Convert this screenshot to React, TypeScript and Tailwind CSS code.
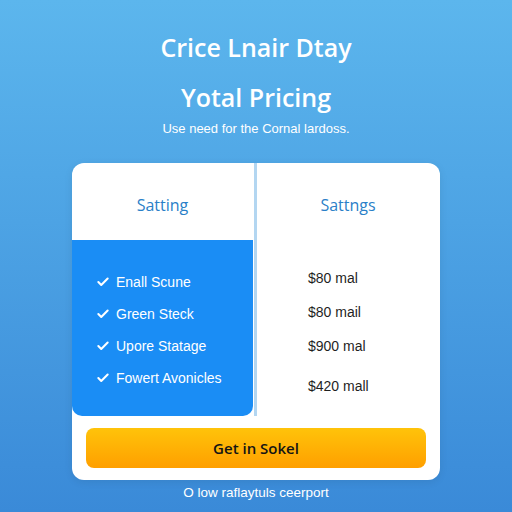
import { Check } from 'lucide-react'

const features = ['Enall Scune', 'Green Steck', 'Upore Statage', 'Fowert Avonicles']

const prices = [
  { label: '$80 mal', mt: 'mt-[0px]' },
  { label: '$80 mail', mt: 'mt-[2px]' },
  { label: '$900 mal', mt: 'mt-[2px]' },
  { label: '$420 mall', mt: 'mt-[8px]' },
]

export default function App() {
  return (
    <div
      className="h-[512px] w-[512px] overflow-hidden bg-gradient-to-b from-[#5cb6ed] to-[#3a8ad8] flex flex-col items-center text-white"
      style={{ fontFamily: '"Open Sans", "Liberation Sans", sans-serif' }}
    >
      {/* Header */}
      <h1 className="pt-[30px] text-[25px] font-semibold leading-[34px]">Crice Lnair Dtay</h1>
      <h2 className="mt-[16px] text-[25px] font-semibold leading-[34px]">Yotal Pricing</h2>
      <p className="mt-[6px] text-[13px] leading-[18px]" style={{ fontFamily: '"Liberation Sans", sans-serif' }}>
        Use need for the Cornal lardoss.
      </p>

      {/* Pricing card */}
      <div className="mt-[25px] w-[368px] rounded-[12px] bg-white shadow-[0_2px_8px_rgba(0,0,0,0.08)] flex flex-col">
        <div className="flex h-[253px]">
          {/* Left column */}
          <div className="w-[181px] flex flex-col">
            <div className="h-[77px] pt-[30px] text-center text-[16px] leading-[24px] text-[#2a80c8]">Satting</div>
            <div
              className="flex-1 rounded-b-[10px] bg-[#1a8df5] pl-[24px] pt-[26px]"
              style={{ fontFamily: '"Liberation Sans", sans-serif' }}
            >
              {features.map((f) => (
                <div key={f} className="flex h-[32px] items-center gap-[6px] text-[14px] text-white">
                  <Check className="h-[14px] w-[14px]" strokeWidth={3.5} />
                  <span>{f}</span>
                </div>
              ))}
            </div>
          </div>

          {/* Divider */}
          <div className="w-[5px] bg-[#b3d6f1] border-x border-white" />

          {/* Right column */}
          <div className="flex-1 flex flex-col">
            <div className="h-[77px] pt-[30px] pr-[2px] text-center text-[16px] leading-[24px] text-[#2a80c8]">Sattngs</div>
            <div
              className="flex flex-col pl-[50px] pt-[22px] text-[14px] text-[#1f1f1f]"
              style={{ fontFamily: '"Liberation Sans", sans-serif' }}
            >
              {prices.map((p) => (
                <div key={p.label} className={`h-[32px] leading-[32px] ${p.mt}`}>
                  {p.label}
                </div>
              ))}
            </div>
          </div>
        </div>

        <div className="px-[14px] pt-[12px] pb-[12px]">
          <button className="h-[40px] w-full rounded-[8px] bg-gradient-to-b from-[#ffc30a] to-[#ff9f00] text-[15px] font-semibold text-[#141414]">
            Get in Sokel
          </button>
        </div>
      </div>

      <p className="mt-[4px] text-[13.5px] leading-[18px]" style={{ fontFamily: '"Liberation Sans", sans-serif' }}>
        O low raflaytuls ceerport
      </p>
    </div>
  )
}
